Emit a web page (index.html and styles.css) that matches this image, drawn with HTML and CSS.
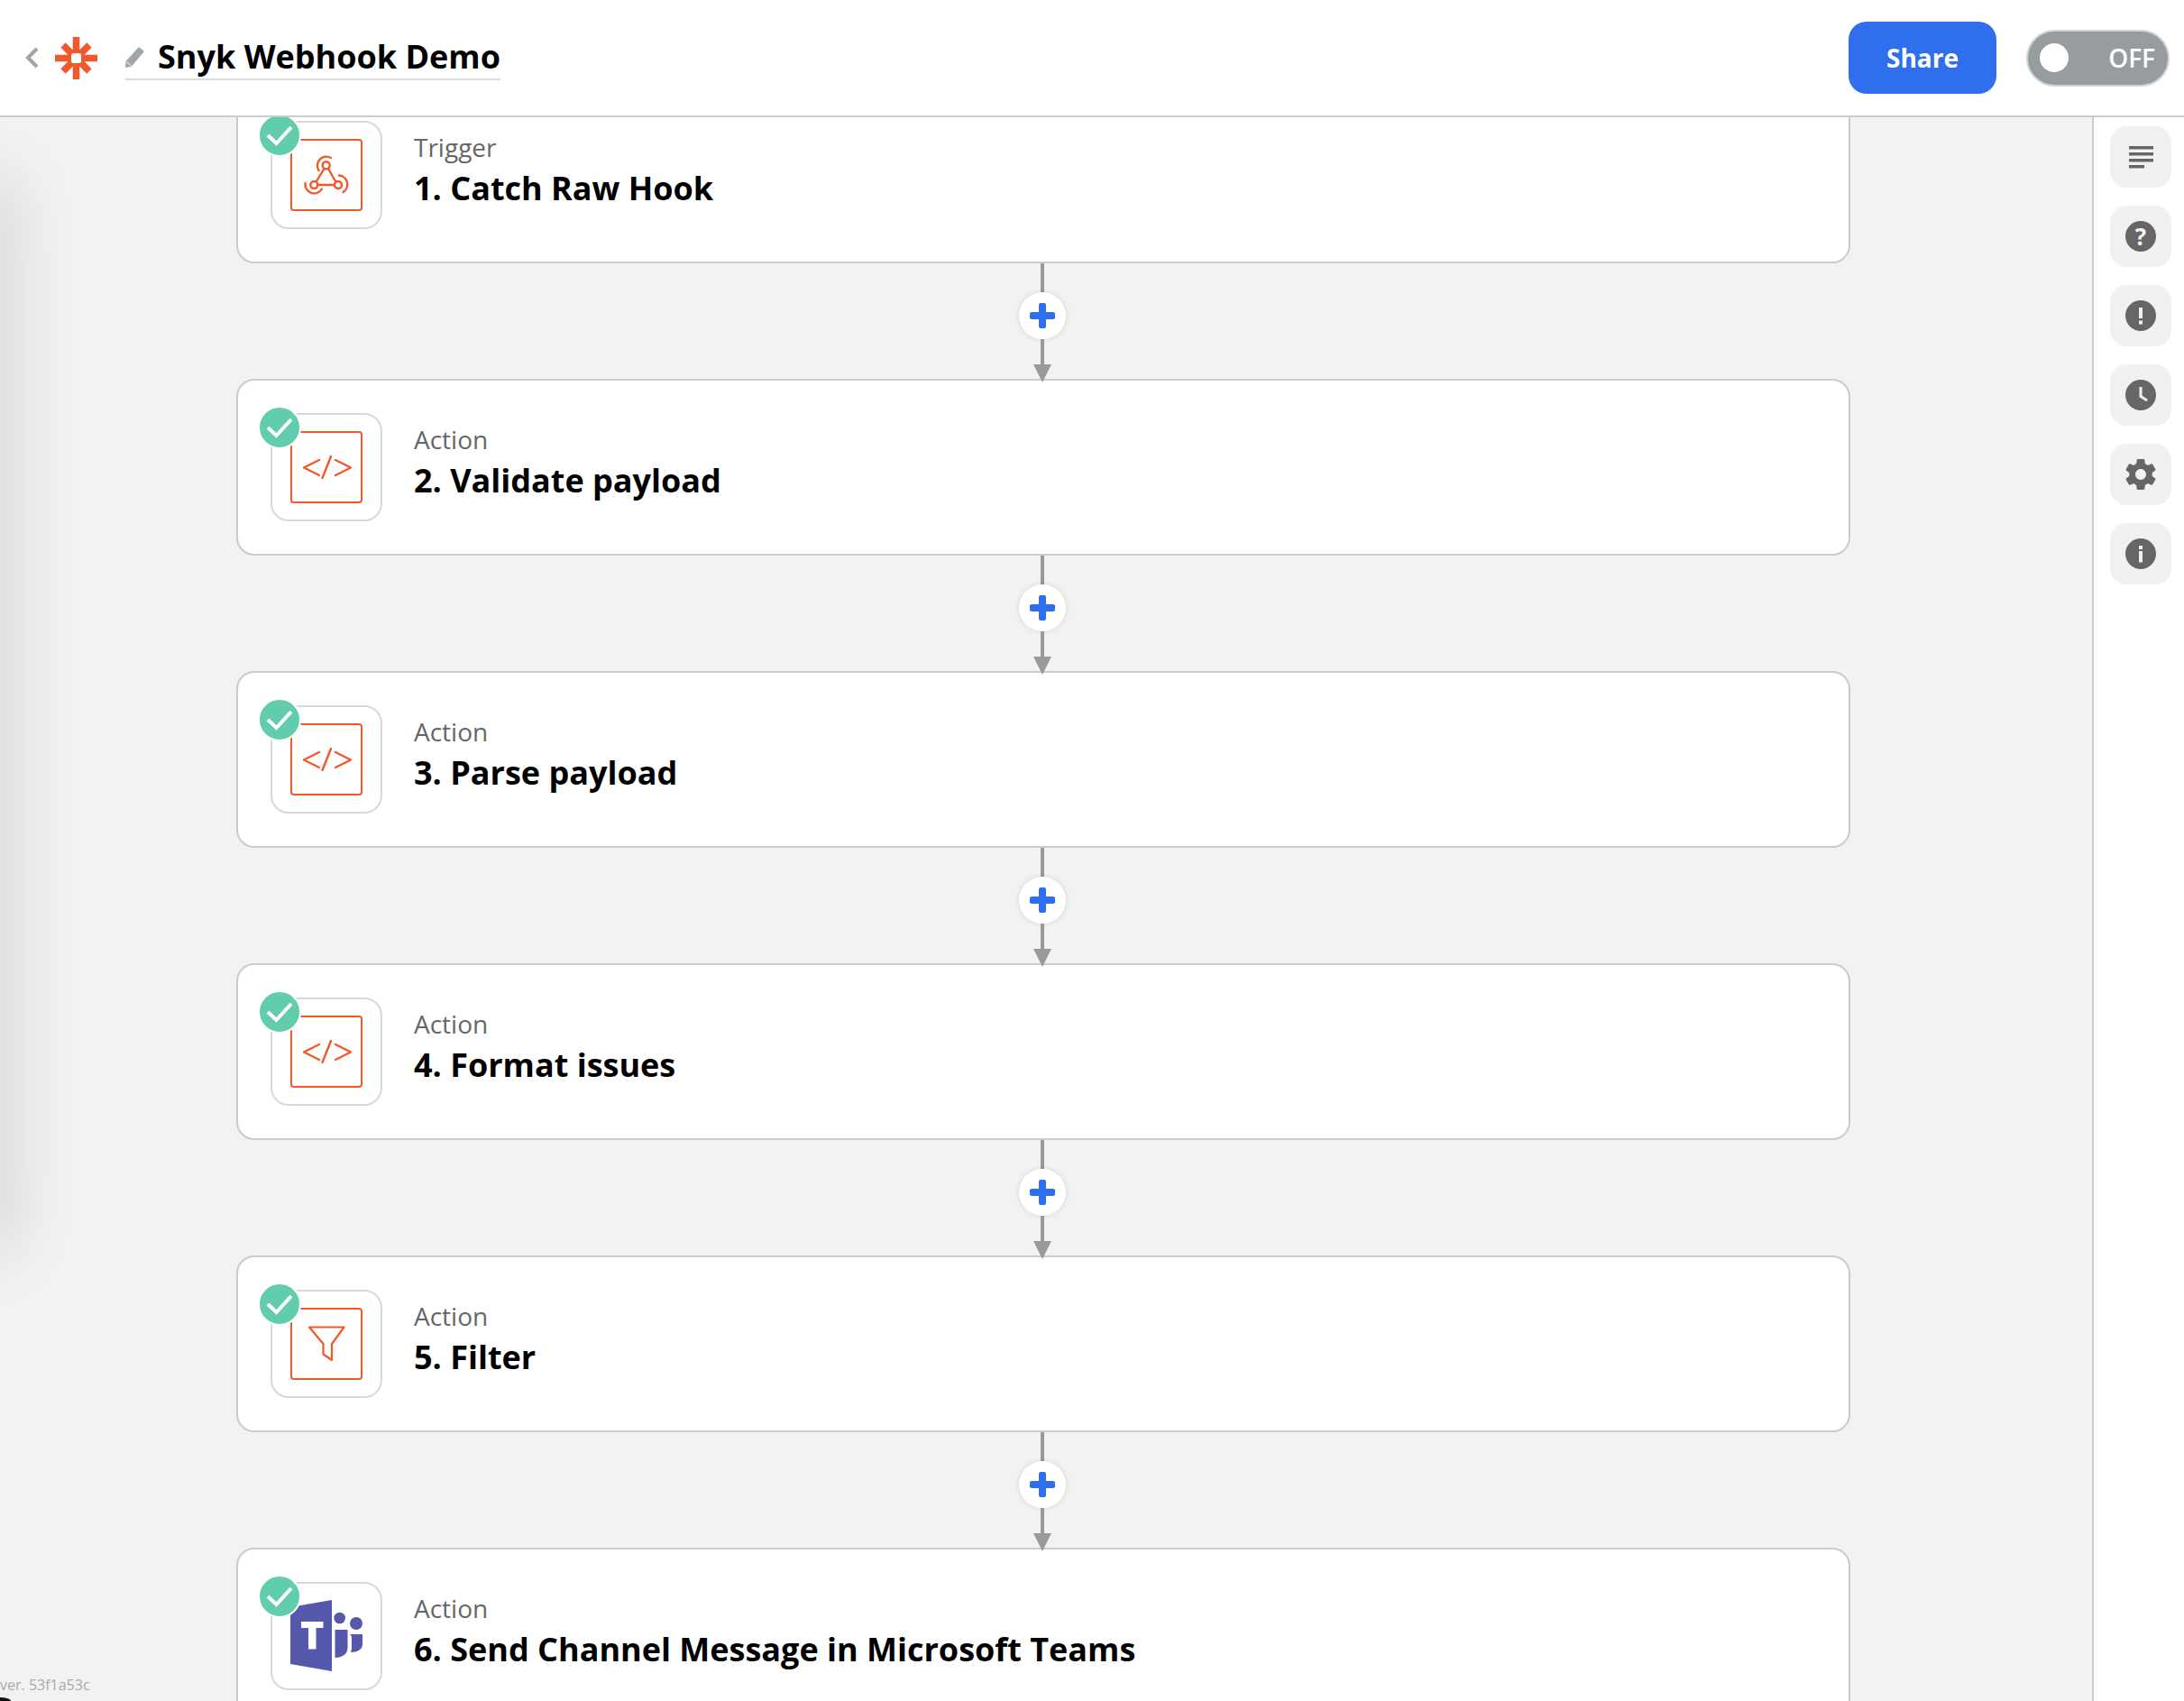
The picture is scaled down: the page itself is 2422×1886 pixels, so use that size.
FILE: index.html
```html
<!DOCTYPE html>
<html lang="en">
<head>
<meta charset="utf-8">
<title>Snyk Webhook Demo</title>
<link rel="stylesheet" href="styles.css">
</head>
<body>
<svg class="defs" width="0" height="0" aria-hidden="true">
  <defs>
    <symbol id="check" viewBox="0 0 44 44">
      <path d="M9 22l9.500 9L35 13" fill="none" stroke="#fff" stroke-width="4"/>
    </symbol>
    <symbol id="code" viewBox="0 0 80 80">
      <rect x="1" y="1" width="78" height="78" rx="3" fill="none" stroke="#f0592c" stroke-width="2"/>
      <path d="M32 32l-17 8.500 17 8.500M50 32l17 8.500-17 8.500M45 28l-9.500 24" fill="none" stroke="#f0592c" stroke-width="2.400" stroke-linecap="round" stroke-linejoin="round"/>
    </symbol>
    <symbol id="plus" viewBox="0 0 28 28">
      <path d="M14 3v22M3 14h22" stroke="#2f6fed" stroke-width="8" stroke-linecap="round"/>
    </symbol>
  </defs>
</svg>
<div class="app">
  <header class="topbar">
    <div class="topbar-left">
      <svg class="chevron" viewBox="0 0 15 24"><path d="M13 2L3 12l10 10" fill="none" stroke="#9ea3a6" stroke-width="4"/></svg>
      <svg class="logo" viewBox="0 0 47 47">
        <path stroke="#f0592c" stroke-width="7.500" d="M23.500 0v47M0 23.500h47M9 9l29 29M38 9L9 38"/>
        <rect x="18" y="18" width="11" height="11" rx="2.500" fill="#fff"/>
      </svg>
      <div class="title-wrap">
        <svg class="pencil" viewBox="0 0 21 23"><path fill="#a0a6a9" d="M15 0l6 5L7 21.500 1 23l-1-1 .5-6z"/><path d="M1.500 16.800l5 4" stroke="#fff" stroke-width="1"/></svg>
        <h1 class="title">Snyk Webhook Demo</h1>
      </div>
    </div>
    <div class="topbar-right">
      <button class="share">Share</button>
      <div class="toggle"><span class="knob"></span><span class="off">OFF</span></div>
    </div>
  </header>
  <main class="workspace">
    <section class="canvas">
      <div class="drawer-shadow"></div>
      <div class="flow">
        <article class="step">
          <div class="app-icon">
            <svg class="glyph" viewBox="0 0 80 80">
              <rect x="1" y="1" width="78" height="78" rx="3" fill="none" stroke="#f0592c" stroke-width="2"/>
              <g fill="none" stroke="#f0592c" stroke-width="2.400" stroke-linecap="round">
                <circle cx="39.700" cy="29.300" r="4"/><circle cx="26.300" cy="51" r="4"/><circle cx="53" cy="51" r="4"/>
                <path d="M37.500 33L29 47M42 33l8 14M30.500 51H49"/>
                <path d="M31.500 35A10 10 0 0 1 45 21"/>
                <path d="M16.500 49A10 10 0 0 0 35 55.500"/>
                <path d="M54 40.500A10 10 0 0 1 58.500 59"/>
              </g>
            </svg>
            <span class="badge"><svg class="check"><use href="#check"/></svg></span>
          </div>
          <div class="step-text"><span class="kind">Trigger</span><span class="name">1. Catch Raw Hook</span></div>
        </article>
        <div class="connector"><span class="line top"></span><span class="add"><svg class="plus"><use href="#plus"/></svg></span><span class="line bottom"></span><span class="arrow"></span></div>
        <article class="step">
          <div class="app-icon">
            <svg class="glyph"><use href="#code"/></svg>
            <span class="badge"><svg class="check"><use href="#check"/></svg></span>
          </div>
          <div class="step-text"><span class="kind">Action</span><span class="name">2. Validate payload</span></div>
        </article>
        <div class="connector"><span class="line top"></span><span class="add"><svg class="plus"><use href="#plus"/></svg></span><span class="line bottom"></span><span class="arrow"></span></div>
        <article class="step">
          <div class="app-icon">
            <svg class="glyph"><use href="#code"/></svg>
            <span class="badge"><svg class="check"><use href="#check"/></svg></span>
          </div>
          <div class="step-text"><span class="kind">Action</span><span class="name">3. Parse payload</span></div>
        </article>
        <div class="connector"><span class="line top"></span><span class="add"><svg class="plus"><use href="#plus"/></svg></span><span class="line bottom"></span><span class="arrow"></span></div>
        <article class="step">
          <div class="app-icon">
            <svg class="glyph"><use href="#code"/></svg>
            <span class="badge"><svg class="check"><use href="#check"/></svg></span>
          </div>
          <div class="step-text"><span class="kind">Action</span><span class="name">4. Format issues</span></div>
        </article>
        <div class="connector"><span class="line top"></span><span class="add"><svg class="plus"><use href="#plus"/></svg></span><span class="line bottom"></span><span class="arrow"></span></div>
        <article class="step">
          <div class="app-icon">
            <svg class="glyph" viewBox="0 0 80 80">
              <rect x="1" y="1" width="78" height="78" rx="3" fill="none" stroke="#f0592c" stroke-width="2"/>
              <path d="M21 21.500h38.500L46 40v18l-9.500-6.500V40z" fill="none" stroke="#f0592c" stroke-width="2.200" stroke-linejoin="round"/>
            </svg>
            <span class="badge"><svg class="check"><use href="#check"/></svg></span>
          </div>
          <div class="step-text"><span class="kind">Action</span><span class="name">5. Filter</span></div>
        </article>
        <div class="connector"><span class="line top"></span><span class="add"><svg class="plus"><use href="#plus"/></svg></span><span class="line bottom"></span><span class="arrow"></span></div>
        <article class="step">
          <div class="app-icon">
            <svg class="glyph" viewBox="0 0 80 80">
              <path fill="#5558ab" d="M0 8L46 0v79L0 71z"/>
              <path fill="#fff" d="M12 24h24.500v7h-8v23.500H20V31h-8z"/>
              <circle cx="54.700" cy="20" r="6.300" fill="#5558ab"/>
              <circle cx="73" cy="26" r="7" fill="#5558ab"/>
              <path fill="#5558ab" d="M49.500 33h14v20c0 7-6 11-14 11zM66 38h14v11c0 6-6 9-13 9 1-3 1-5 1-8v-8c0-2-1-3-2-4z"/>
            </svg>
            <span class="badge"><svg class="check"><use href="#check"/></svg></span>
          </div>
          <div class="step-text"><span class="kind">Action</span><span class="name">6. Send Channel Message in Microsoft Teams</span></div>
        </article>
      </div>
      <span class="version">ver. 53f1a53c</span>
      <span class="corner"></span>
    </section>
    <aside class="sidebar">
      <button class="side-btn"><svg class="side-icon" viewBox="0 0 34 34"><path fill="#666" d="M1 0h27v3.500H1zM1 7h27v3.500H1zM1 14h27v3.500H1zM1 21h17v3.500H1z" transform="translate(3 5)"/></svg></button>
      <button class="side-btn"><span class="q-icon">?</span></button>
      <button class="side-btn"><svg class="side-icon" viewBox="0 0 34 34"><circle cx="17" cy="17" r="17" fill="#666"/><rect x="15" y="8" width="4" height="12" fill="#f1f1f1"/><rect x="15" y="22.500" width="4" height="4" fill="#f1f1f1"/></svg></button>
      <button class="side-btn"><svg class="side-icon" viewBox="0 0 34 34"><circle cx="17" cy="17" r="17" fill="#666"/><path d="M17 8v10.500l7 4.500" fill="none" stroke="#f1f1f1" stroke-width="3"/></svg></button>
      <button class="side-btn"><svg class="side-icon" viewBox="2 2 20 20"><path fill="#666" fill-rule="evenodd" d="M19.430 12.980c.04-.32.070-.64.070-.98s-.03-.66-.07-.98l2.110-1.650c.19-.15.240-.42.120-.64l-2-3.460c-.12-.22-.39-.30-.61-.22l-2.490 1c-.52-.40-1.080-.73-1.690-.98l-.38-2.650C14.460 2.180 14.250 2 14 2h-4c-.25 0-.46.180-.49.420l-.38 2.650c-.61.250-1.170.590-1.690.98l-2.490-1c-.23-.09-.49 0-.61.220l-2 3.460c-.13.220-.07.490.12.640l2.110 1.650c-.04.320-.07.650-.07.980s.03.660.07.980l-2.110 1.650c-.19.150-.24.420-.12.640l2 3.460c.12.220.39.300.61.220l2.490-1c.52.400 1.080.730 1.690.980l.38 2.650c.03.240.24.420.49.420h4c.25 0 .46-.18.49-.42l.38-2.650c.61-.25 1.170-.59 1.690-.98l2.490 1c.23.090.49 0 .61-.22l2-3.460c.12-.22.070-.49-.12-.64l-2.110-1.650zM12 15.500c-1.930 0-3.500-1.570-3.500-3.500s1.570-3.500 3.500-3.500 3.500 1.570 3.500 3.500-1.570 3.500-3.500 3.500z"/></svg></button>
      <button class="side-btn"><svg class="side-icon" viewBox="0 0 34 34"><circle cx="17" cy="17" r="17" fill="#666"/><rect x="15" y="14" width="4" height="12.500" fill="#f1f1f1"/><rect x="15" y="8" width="4" height="4" fill="#f1f1f1"/></svg></button>
    </aside>
  </main>
</div>
</body>
</html>
```

FILE: styles.css
```css
* { box-sizing: border-box; }
html, body { margin: 0; height: 100%; }
body { font-family: "Open Sans", "Noto Sans", sans-serif; background: #fff; color: #000; overflow: hidden; }
.defs { position: absolute; }
.app { display: flex; flex-direction: column; height: 1886px; }

.topbar { flex: 0 0 130px; display: flex; justify-content: space-between; align-items: center; background: #fff; border-bottom: 2px solid #ccc; padding: 0 16px 0 28px; }
.topbar-left { display: flex; align-items: center; }
.chevron { width: 15px; height: 24px; margin-right: 17px; }
.logo { width: 47px; height: 47px; margin-right: 31px; margin-left: 1px; }
.title-wrap { display: flex; align-items: center; gap: 15px; height: 50px; border-bottom: 2px solid #d6dbdf; }
.pencil { width: 21px; height: 23px; }
.title { margin: 0; font-size: 36px; font-weight: 700; line-height: 48px; white-space: nowrap; }
.topbar-right { display: flex; align-items: center; gap: 33px; }
.share { width: 164px; height: 80px; border: 0; border-radius: 20px; background: #2f6fed; color: #fff; font: 700 28px "Open Sans", sans-serif; }
.toggle { width: 159px; height: 63px; border-radius: 32px; background: #969c9f; border: 2px solid #d2d4d5; display: flex; align-items: center; justify-content: space-between; padding: 0 14px 0 13px; }
.knob { width: 32px; height: 32px; border-radius: 50%; background: #fff; }
.off { color: #fff; font-size: 28px; font-weight: 600; }

.workspace { flex: 1; display: flex; min-height: 0; }
.canvas { position: relative; flex: 1; background: #f2f2f2; overflow: hidden; }
.drawer-shadow { position: absolute; left: -30px; top: 75px; width: 30px; height: 1175px; box-shadow: 0 0 80px 4px rgba(0,0,0,.2); }
.flow { display: flex; flex-direction: column; align-items: center; margin-top: -34px; padding: 0 268px 0 262px; }
.step { width: 100%; height: 196px; flex: 0 0 196px; background: #fff; border: 2px solid #cbcbcb; border-radius: 20px; display: flex; align-items: flex-start; padding: 36px 0 0 36px; }
.app-icon { position: relative; width: 124px; height: 120px; border: 2px solid #d9d9d9; border-radius: 20px; background: #fff; display: flex; align-items: center; justify-content: center; }
.glyph { width: 80px; height: 80px; }
.badge { position: absolute; left: -16px; top: -10px; width: 48px; height: 48px; border-radius: 50%; background: #61cdad; border: 2px solid #fff; display: flex; align-items: center; justify-content: center; }
.check { width: 44px; height: 44px; }
.step-text { display: flex; flex-direction: column; margin-left: 35px; padding-top: 9px; }
.kind { font-size: 28px; line-height: 41px; color: #666; }
.name { font-size: 36px; line-height: 50px; font-weight: 700; white-space: nowrap; }

.connector { position: relative; z-index: 1; display: flex; flex-direction: column; align-items: center; flex: 0 0 132px; margin-bottom: -4px; margin-left: -2px; }
.line { width: 4px; background: #999; }
.line.top { height: 32px; }
.line.bottom { height: 28px; }
.add { width: 52px; height: 52px; border-radius: 50%; background: #fff; box-shadow: 0 0 6px rgba(0,0,0,.12); display: flex; align-items: center; justify-content: center; }
.plus { width: 28px; height: 28px; }
.arrow { width: 0; height: 0; border-left: 10px solid transparent; border-right: 10px solid transparent; border-top: 20px solid #999; }
.version { position: absolute; left: 0; bottom: 8px; font-size: 16px; line-height: 20px; color: #aaa; }
.corner { position: absolute; left: 0; bottom: 0; width: 12px; height: 4px; background: #111; border-top-right-radius: 100%; }

.sidebar { flex: 0 0 102px; border-left: 2px solid #ccc; background: #fff; display: flex; flex-direction: column; gap: 20px; padding: 10px 0 0 18px; }
.side-btn { width: 68px; height: 68px; padding: 0; border: 0; border-radius: 18px; background: #f1f1f1; display: flex; align-items: center; justify-content: center; }
.side-icon { width: 34px; height: 34px; }
.q-icon { width: 34px; height: 34px; border-radius: 50%; background: #666; color: #f1f1f1; font: 700 26px/34px "Open Sans", sans-serif; text-align: center; }
```
